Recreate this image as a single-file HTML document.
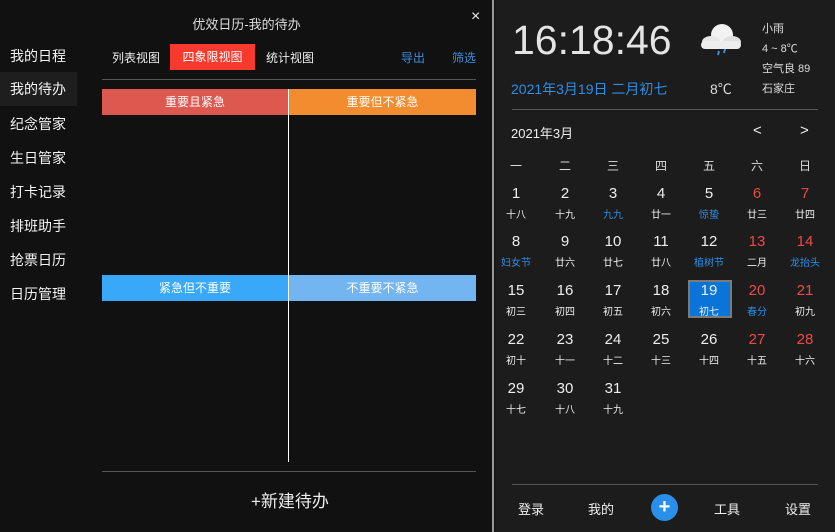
<!DOCTYPE html>
<html><head><meta charset="utf-8"><style>
*{margin:0;padding:0;box-sizing:border-box}
body{width:835px;height:532px;overflow:hidden;background:#111;font-family:"Liberation Sans","Noto Sans CJK SC",sans-serif;color:#fff;position:relative}
.a{position:absolute;white-space:nowrap}
.nav{left:0;width:77px;height:34px;line-height:34px;padding-left:10px;font-size:14px;color:#f4f4f4}
.right{position:absolute;left:495px;top:0;width:340px;height:532px;background:#1c1c1c}
.c{position:absolute;width:44px;text-align:center;transform:translateX(-22px)}
.n{font-size:15px;color:#eee}
.l{font-size:10px;color:#eee}
.red{color:#f04848}.blue{color:#2a8fe8}
</style></head><body>
<div class="a" style="left:0;top:14px;width:493px;text-align:center;font-size:13px;color:#ddd">优效日历-我的待办</div>
<div class="a" style="left:471px;top:8px;font-size:16px;color:#eee">×</div>
<div style="position:absolute;left:492px;top:0;width:2px;height:532px;background:#9a9a9a"></div>

<div class="a nav" style="top:39px">我的日程</div>
<div class="a nav" style="top:72px;background:#1e1e1e">我的待办</div>
<div class="a nav" style="top:107px">纪念管家</div>
<div class="a nav" style="top:141px">生日管家</div>
<div class="a nav" style="top:175px">打卡记录</div>
<div class="a nav" style="top:209px">排班助手</div>
<div class="a nav" style="top:243px">抢票日历</div>
<div class="a nav" style="top:277px">日历管理</div>

<div class="a" style="left:112px;top:49px;font-size:12px;color:#eee">列表视图</div>
<div class="a" style="left:170px;top:44px;width:85px;height:26px;background:#f83a2e;font-size:12px;line-height:26px;text-align:center">四象限视图</div>
<div class="a" style="left:266px;top:49px;font-size:12px;color:#eee">统计视图</div>
<div class="a" style="left:401px;top:49px;font-size:12px;color:#3a8ee0">导出</div>
<div class="a" style="left:452px;top:49px;font-size:12px;color:#3a8ee0">筛选</div>
<div class="a" style="left:102px;top:79px;width:374px;height:1px;background:#555"></div>

<div class="a" style="left:102px;top:89px;width:186px;height:26px;background:#dd5950;font-size:12px;line-height:26px;text-align:center">重要且紧急</div>
<div class="a" style="left:289px;top:89px;width:187px;height:26px;background:#f38c2e;font-size:12px;line-height:26px;text-align:center">重要但不紧急</div>
<div class="a" style="left:102px;top:275px;width:186px;height:26px;background:#3aa8f8;font-size:12px;line-height:26px;text-align:center">紧急但不重要</div>
<div class="a" style="left:289px;top:275px;width:187px;height:26px;background:#72b5f0;font-size:12px;line-height:26px;text-align:center">不重要不紧急</div>
<div class="a" style="left:288px;top:89px;width:1px;height:373px;background:#fff"></div>
<div class="a" style="left:102px;top:471px;width:374px;height:1px;background:#555"></div>
<div class="a" style="left:251px;top:487px;font-size:17px;color:#eee">+新建待办</div>

<div class="right">
<div class="a" style="left:17px;top:17px;font-size:41px;color:#e4e4e4">16:18:46</div>
<div class="a" style="left:16px;top:79px;font-size:14px;color:#2a8fe8">2021年3月19日 二月初七</div>
<svg class="a" style="left:204px;top:22px" width="44" height="34" viewBox="0 0 44 34"><ellipse cx="23" cy="13" rx="11" ry="11" fill="#f2f2f2"/><ellipse cx="12" cy="20" rx="9" ry="6" fill="#e8e8e8"/><ellipse cx="33" cy="20" rx="9" ry="6" fill="#e0e0e0"/><rect x="2" y="19" width="40" height="8" rx="4" fill="#eee"/><path d="M20 29l-1 4M26 27l-1 4" stroke="#3a8ee0" stroke-width="2"/></svg>
<div class="a" style="left:215px;top:79px;font-size:14px;color:#ddd">8℃</div>
<div class="a" style="left:267px;top:19px;font-size:11px;color:#ddd;line-height:20px">小雨<br>4 ~ 8℃<br>空气良 89<br>石家庄</div>
<div class="a" style="left:17px;top:109px;width:306px;height:1px;background:#555"></div>
<div class="a" style="left:16px;top:123px;font-size:13px;color:#eee">2021年3月</div>
<div class="a" style="left:258px;top:122px;font-size:15px;color:#eee">&lt;</div>
<div class="a" style="left:305px;top:122px;font-size:15px;color:#eee">&gt;</div>

<div class="a" style="left:193px;top:280px;width:44px;height:38px;background:#0a74d8;border:2px solid #7a7a7a"></div>

<div id="cal"></div>

<div class="a" style="left:17px;top:484px;width:306px;height:1px;background:#555"></div>
<div class="a" style="left:23px;top:499px;font-size:13px;color:#eee">登录</div>
<div class="a" style="left:93px;top:499px;font-size:13px;color:#eee">我的</div>
<div class="a" style="left:156px;top:494px;width:27px;height:27px;border-radius:50%;background:#2a8fe8;text-align:center;line-height:26px;font-size:20px;font-weight:bold">+</div>
<div class="a" style="left:219px;top:499px;font-size:13px;color:#eee">工具</div>
<div class="a" style="left:290px;top:499px;font-size:13px;color:#eee">设置</div>
</div>
<script>
var xs=[21,70,118,166,214,262,310];
var w=["一","二","三","四","五","六","日"];
var h='';
w.forEach(function(t,i){h+='<div class="c" style="left:'+xs[i]+'px;top:157px;font-size:12px;color:#ddd">'+t+'</div>';});
var lun=["十八","十九","九九","廿一","惊蛰","廿三","廿四","妇女节","廿六","廿七","廿八","植树节","二月","龙抬头","初三","初四","初五","初六","初七","春分","初九","初十","十一","十二","十三","十四","十五","十六","十七","十八","十九"];
var bl={3:1,5:1,8:1,12:1,14:1,20:1};
var ys=[185,233,282,331,380];
for(var d=1;d<=31;d++){var i=d-1,r=Math.floor(i/7),c=i%7;
var nc=(c>=5&&d!=19)?'red':'';
h+='<div class="c n '+nc+'" style="left:'+xs[c]+'px;top:'+ys[r]+'px">'+d+'</div>';
h+='<div class="c l '+(bl[d]?'blue':'')+'" style="left:'+xs[c]+'px;top:'+(ys[r]+21)+'px">'+lun[i]+'</div>';}
document.getElementById('cal').innerHTML=h;
</script>
</body></html>
